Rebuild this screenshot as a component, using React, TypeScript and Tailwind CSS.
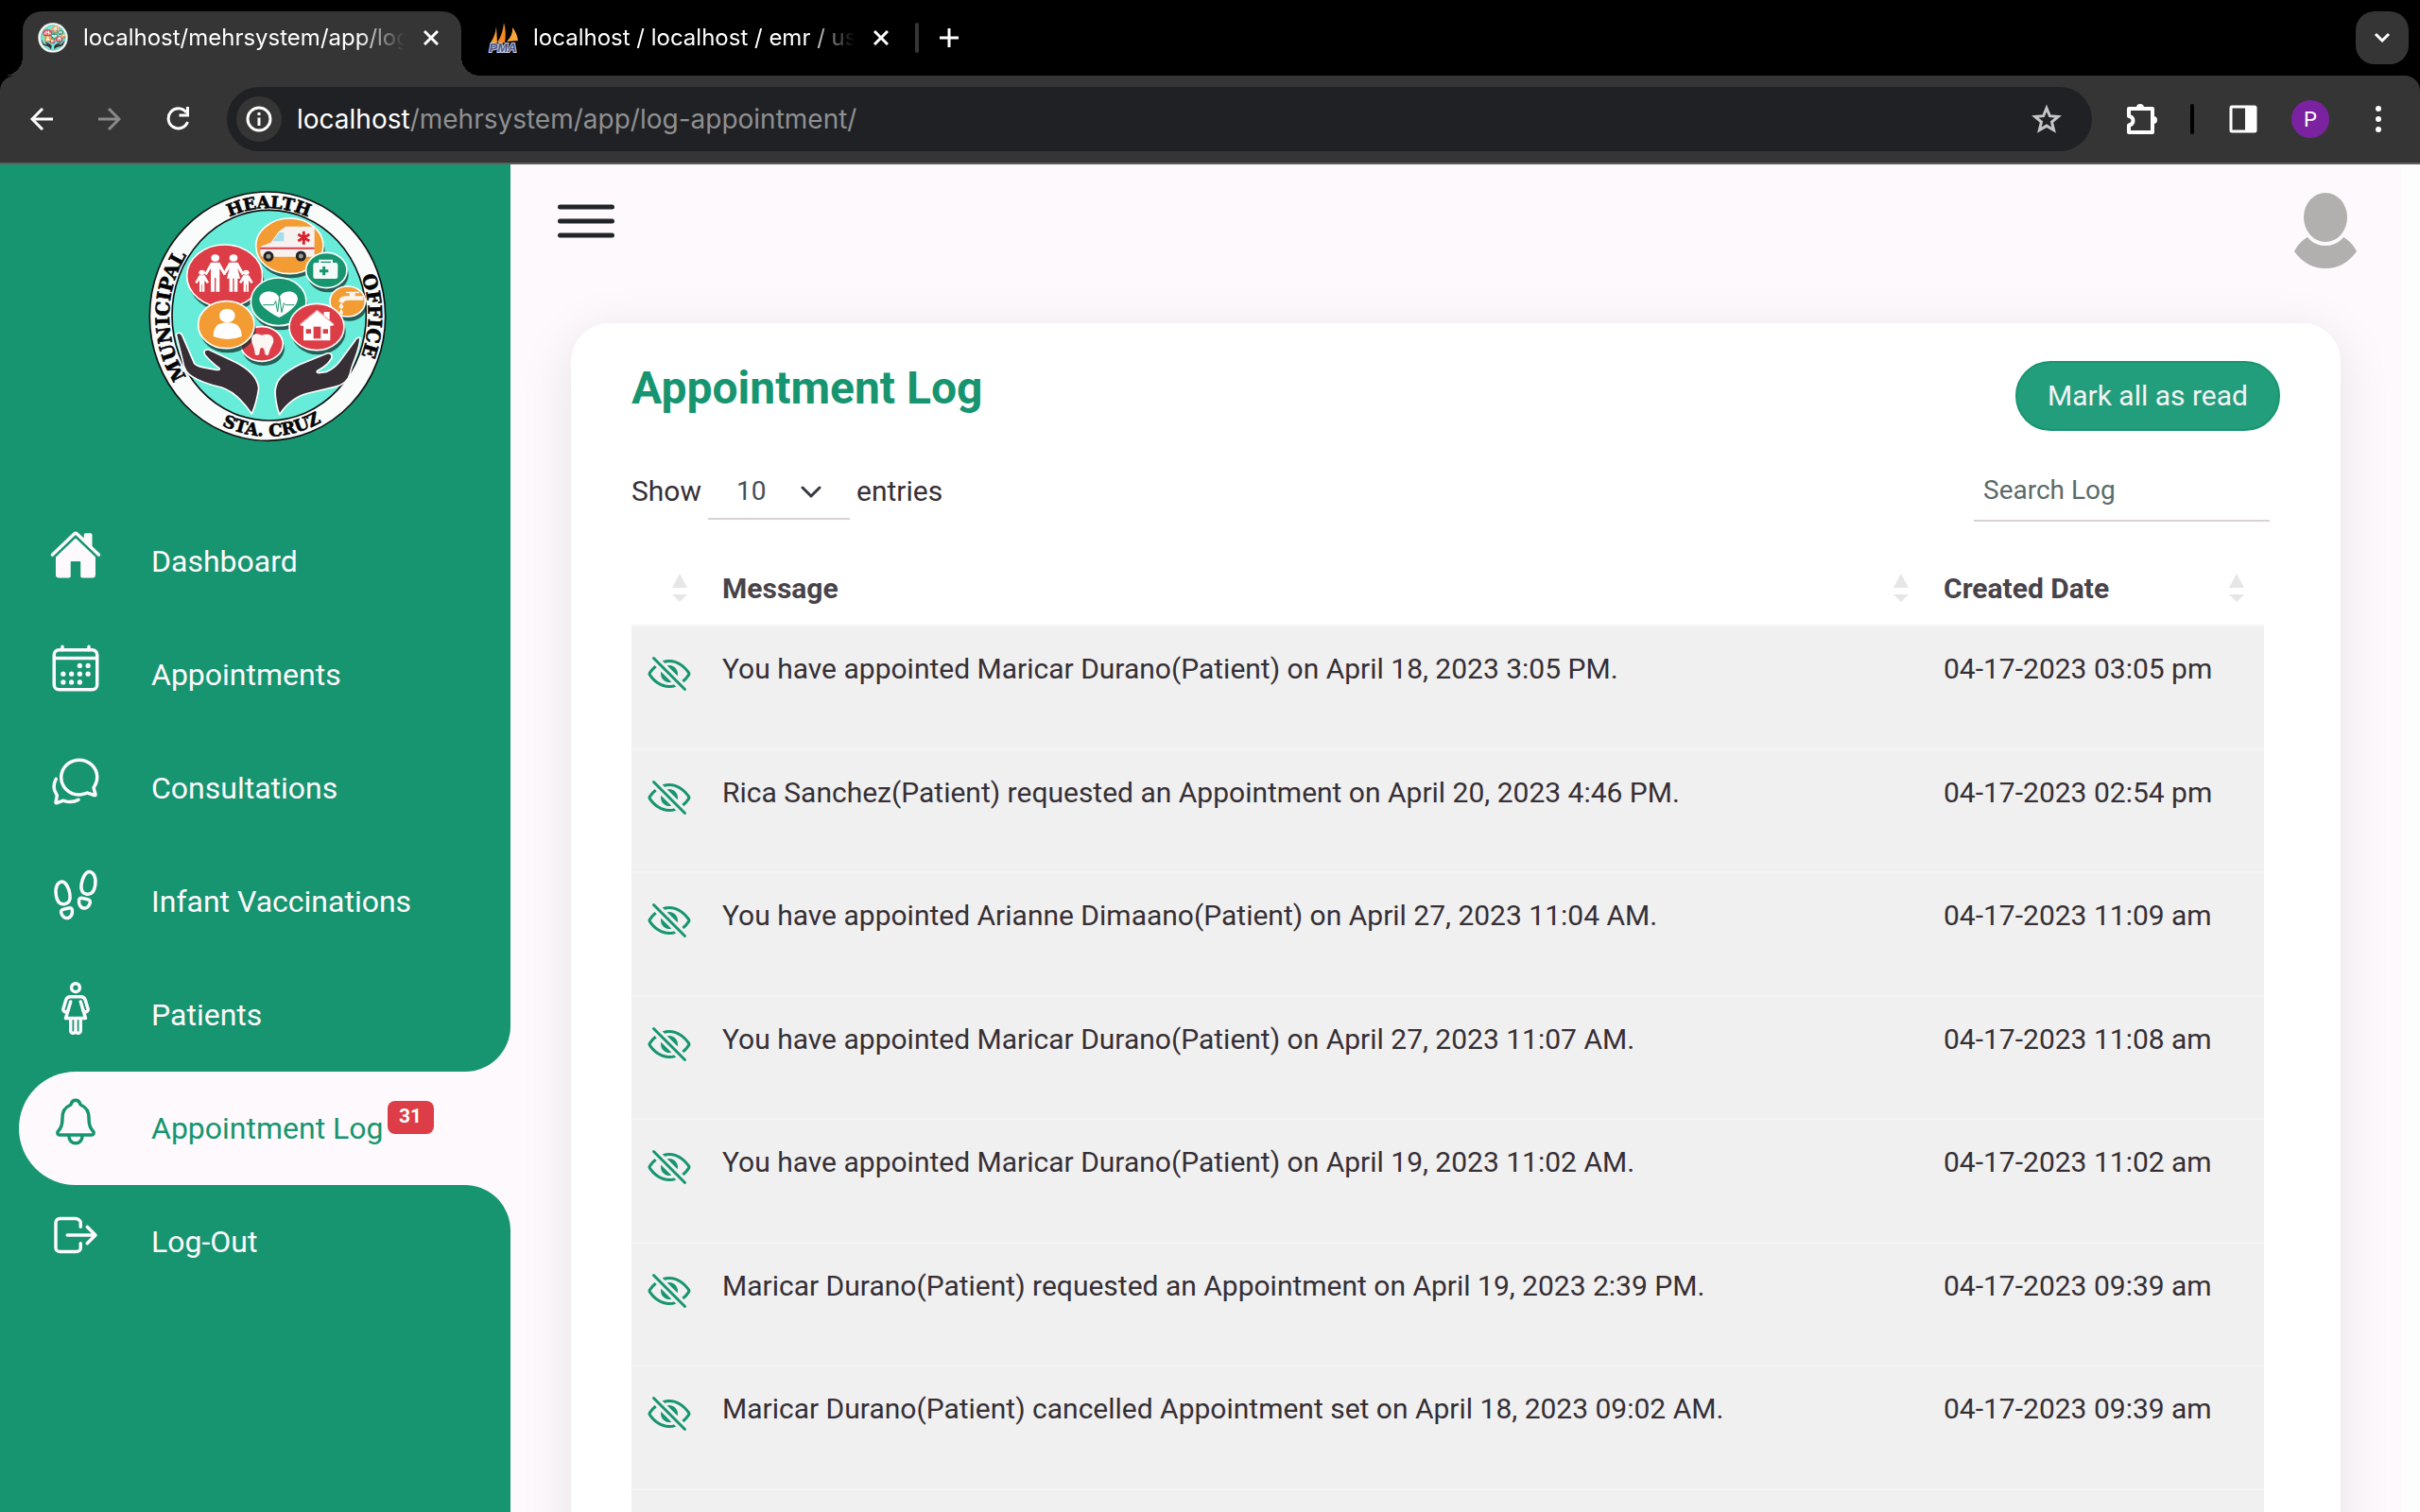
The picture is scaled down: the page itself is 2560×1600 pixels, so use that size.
import React from "react";
import {
  IoCalendarOutline,
  IoChatbubblesOutline,
  IoEyeOffOutline,
  IoFootstepsOutline,
  IoHome,
  IoLogOutOutline,
  IoMenuOutline,
  IoNotificationsOutline,
  IoWomanOutline,
} from "react-icons/io5";
import type { IconType } from "react-icons";

const LOGS = [
  { message: "You have appointed Maricar Durano(Patient) on April 18, 2023 3:05 PM.", date: "04-17-2023 03:05 pm" },
  { message: "Rica Sanchez(Patient) requested an Appointment on April 20, 2023 4:46 PM.", date: "04-17-2023 02:54 pm" },
  { message: "You have appointed Arianne Dimaano(Patient) on April 27, 2023 11:04 AM.", date: "04-17-2023 11:09 am" },
  { message: "You have appointed Maricar Durano(Patient) on April 27, 2023 11:07 AM.", date: "04-17-2023 11:08 am" },
  { message: "You have appointed Maricar Durano(Patient) on April 19, 2023 11:02 AM.", date: "04-17-2023 11:02 am" },
  { message: "Maricar Durano(Patient) requested an Appointment on April 19, 2023 2:39 PM.", date: "04-17-2023 09:39 am" },
  { message: "Maricar Durano(Patient) cancelled Appointment set on April 18, 2023 09:02 AM.", date: "04-17-2023 09:39 am" },
];

const NAV: { label: string; Icon: IconType; active?: boolean; badge?: string }[] = [
  { label: "Dashboard", Icon: IoHome },
  { label: "Appointments", Icon: IoCalendarOutline },
  { label: "Consultations", Icon: IoChatbubblesOutline },
  { label: "Infant Vaccinations", Icon: IoFootstepsOutline },
  { label: "Patients", Icon: IoWomanOutline },
  { label: "Appointment Log", Icon: IoNotificationsOutline, active: true, badge: "31" },
  { label: "Log-Out", Icon: IoLogOutOutline },
];

function Bubble({ cx, cy, rx, ry, fill }: { cx: number; cy: number; rx: number; ry: number; fill: string }) {
  return (
    <>
      <ellipse cx={cx + 5} cy={cy + 14} rx={rx} ry={ry} fill="#12302c" opacity="0.75" />
      <ellipse cx={cx} cy={cy} rx={rx} ry={ry} fill={fill} stroke="#fff" strokeWidth="5" />
    </>
  );
}

function Adult({ x, y, skirt }: { x: number; y: number; skirt?: boolean }) {
  return (
    <g fill="#fff" transform={`translate(${x} ${y})`}>
      <ellipse cx="0" cy="11" rx="13" ry="11" />
      {skirt ? (
        <path d="M-14 25h28l20 36-7 5-14-22 8 32h-8v42h-11v-42h-4v42h-11v-42h-8l8-32-14 22-7-5z" />
      ) : (
        <path d="M-14 25h28l20 36-7 5-13-22v74H2V74h-4v44h-12V44l-13 22-7-5z" />
      )}
    </g>
  );
}

function Child({ x, y }: { x: number; y: number }) {
  return (
    <g fill="#fff" transform={`translate(${x} ${y})`}>
      <ellipse cx="0" cy="8" rx="10" ry="8" />
      <path d="M-9 17H9l13 22-6 4-8-10v36H1V46h-2v23h-7V33l-8 10-6-4z" />
    </g>
  );
}

function HealthOfficeLogo({ className, lettering }: { className: string; lettering?: boolean }) {
  return (
    <svg viewBox="52 36 756 798" preserveAspectRatio="none" className={className} role="img" aria-label="Municipal Health Office logo">
      <defs>
        <path id="ring-clockwise" d="M434 775A316 342 0 0 1 118 433A316 342 0 0 1 434 91A316 342 0 0 1 750 433A316 342 0 0 1 434 775" />
        <path id="ring-bottom" d="M76 431A357 384 0 0 0 433 815A357 384 0 0 0 790 431" />
      </defs>
      <ellipse cx="430" cy="434" rx="374" ry="395" fill="#fafcfb" stroke="#111" strokeWidth="5" />
      <ellipse cx="435" cy="431" rx="308" ry="334" fill="#66ecd8" stroke="#111" strokeWidth="5" />

      <Bubble cx={500} cy={211} rx={107} ry={88} fill="#f29c33" />
      <Bubble cx={294} cy={306} rx={120} ry={99} fill="#dc3d47" />
      <Bubble cx={617} cy={288} rx={65} ry={56} fill="#17956f" />
      <Bubble cx={684} cy={387} rx={56} ry={48} fill="#f29c33" />
      <Bubble cx={465} cy={388} rx={88} ry={76} fill="#17956f" />
      <Bubble cx={586} cy={468} rx={87} ry={74} fill="#dc3d47" />
      <Bubble cx={412} cy={522} rx={67} ry={55} fill="#dc3d47" />
      <Bubble cx={299} cy={461} rx={89} ry={75} fill="#f29c33" />

      <path d="M408 212l32-12 26-36 22-15h85q6 0 6 6v90H412q-8-8-4-33z" fill="#f7f1f0" />
      <path d="M446 196l22-28h14v28z" fill="#a6dcec" />
      <path d="M406 218h173" stroke="#dc3d47" strokeWidth="6" />
      <path d="M545 164v42M527 174l36 21M563 174l-36 21" stroke="#d8232f" strokeWidth="9" />
      <circle cx="433" cy="244" r="12" fill="#999" stroke="#222" strokeWidth="9" />
      <circle cx="536" cy="243" r="12" fill="#999" stroke="#222" strokeWidth="9" />

      <Adult x={264} y={238} />
      <Adult x={322} y={238} skirt />
      <Child x={222} y={287} />
      <Child x={362} y={287} />

      <rect x="575" y="264" width="78" height="51" rx="7" fill="#f4faf8" />
      <path d="M596 266v-9h38v9" fill="none" stroke="#f4faf8" strokeWidth="6" />
      <path d="M609 276v28M595 290h28" stroke="#17956f" strokeWidth="9" />

      <path d="M656 388q2-18 20-18h14v-9h-11v-5h42v5h-13v9h26v13h-44q-18 0-20 10z" fill="#f9f4ec" />
      <path d="M664 391l7 12a7 7 0 1 1-14 0zM664 410l5 9a6 6 0 1 1-10 0z" fill="#f9f4ec" />

      <path d="M467 438C440 425 404 402 404 379C407 350 455 348 467 374C480 348 524 350 526 379C525 402 494 425 467 438z" fill="#fff" />
      <path d="M416 398h34l6-12 6 34 6-48 7 50 7-30 5 6h28" fill="none" stroke="#17956f" strokeWidth="3" />

      <path d="M532 459l55-46 22 17v-10h18v26l15 13-5 5h-8v47h-85v-47h-8z" fill="#fff" />
      <path d="M532 461l55-46 56 46" fill="none" stroke="#dc3d47" strokeWidth="2" />
      <rect x="576" y="467" width="23" height="38" fill="#dc3d47" />
      <path d="M552 475h16v14h-16zM606 475h16v14h-16z" fill="#dc3d47" />

      <ellipse cx="302" cy="432" rx="25" ry="22" fill="#fff" />
      <path d="M258 498c0-30 14-44 44-44s46 14 46 44q-45 18-90 0z" fill="#fff" />

      <path d="M380 500c8-16 22-9 32-6c12-4 30-6 36 10c5 18-10 26-14 50q-4 8-12 0c-2-14-4-20-10-20s-6 10-8 20q-8 8-14 0c0-24-14-34-10-54z" fill="#fbf6f4" />

      <g fill="#362f35" stroke="#fff" strokeWidth="5" strokeLinejoin="round">
        <path d="M140 492q12-12 20 4l38 88q8 8 26 12l44 8q14 2 8-6q-20-14-44-40q-10-20 12-18l84 40c44 22 70 46 74 82q-6 46-22 82c-30-44-58-72-96-84q-62-14-92-34q-26-12-32-54z" />
        <path d="M724 502q-12-2-18 12l-46 62q-16 22-42 34l-26 4q-10-2-2-8q32-16 44-40q2-18-16-14l-88 36c-50 26-74 46-76 86q2 40 14 72c24-36 58-60 92-68l84-20q40-10 48-42c8-40 30-68 32-114z" />
      </g>

      {lettering && (
        <g fontFamily="'DejaVu Serif', serif" fontWeight="700" textAnchor="middle" fill="#050505" stroke="#050505" strokeWidth="2">
          <text fontSize="60"><textPath href="#ring-clockwise" startOffset="25%">MUNICIPAL</textPath></text>
          <text fontSize="54"><textPath href="#ring-clockwise" startOffset="50%">HEALTH</textPath></text>
          <text fontSize="60"><textPath href="#ring-clockwise" startOffset="75%">OFFICE</textPath></text>
          <text fontSize="54"><textPath href="#ring-bottom" startOffset="51%">STA. CRUZ</textPath></text>
        </g>
      )}
    </svg>
  );
}

function PmaIcon() {
  return (
    <svg viewBox="0 0 32 32" className="size-8 shrink-0 overflow-visible" aria-hidden="true">
      <path d="M3 21Q8 14 9 4L10 21z" fill="#f89c2e" />
      <path d="M10 21Q16 12 17 0Q20 10 18 21z" fill="#f58a1f" />
      <path d="M20 20Q27 13 26 5Q31 11 32 19z" fill="#f8a43d" />
      <text x="16" y="31" textAnchor="middle" fontFamily="'Liberation Sans', sans-serif" fontSize="13" fontWeight="700" fontStyle="italic" fill="#4d5487" stroke="#c9cbe0" strokeWidth="2" paintOrder="stroke">PMA</text>
    </svg>
  );
}

function CloseIcon() {
  return (
    <svg viewBox="0 0 16 16" className="size-4" fill="none" stroke="currentColor" strokeWidth="3" aria-hidden="true">
      <path d="M1 1l14 14M15 1L1 15" />
    </svg>
  );
}

function BrowserTabs() {
  return (
    <div className="flex h-20 items-stretch bg-black pl-6 text-[24px] text-white">
      <div className="relative mt-3 flex w-[464px] items-center rounded-t-[20px] bg-[#353535] pb-3 pl-4">
        <span className="absolute bottom-0 -left-5 size-5 bg-[radial-gradient(circle_at_0_0,transparent_20px,#353535_20px)]" />
        <span className="absolute -right-5 bottom-0 size-5 bg-[radial-gradient(circle_at_100%_0,transparent_20px,#353535_20px)]" />
        <HealthOfficeLogo className="size-8 shrink-0" />
        <span className="ml-4 w-[340px] whitespace-nowrap [mask-image:linear-gradient(to_right,black_290px,transparent_340px)]">localhost/mehrsystem/app/log</span>
        <button type="button" aria-label="Close tab" className="ml-5"><CloseIcon /></button>
      </div>
      <div className="flex w-[480px] items-center pl-7">
        <PmaIcon />
        <span className="ml-4 w-[340px] whitespace-nowrap [mask-image:linear-gradient(to_right,black_290px,transparent_340px)]">localhost / localhost / emr / us</span>
        <button type="button" aria-label="Close tab" className="ml-5"><CloseIcon /></button>
      </div>
      <span className="mt-6 h-8 w-1 rounded-full bg-[#353535]" />
      <button type="button" aria-label="New tab" className="ml-5 flex items-center">
        <svg viewBox="0 0 24 24" className="size-6" stroke="currentColor" strokeWidth="3" aria-hidden="true"><path d="M2 12h20M12 2v20" /></svg>
      </button>
      <button type="button" aria-label="Search tabs" className="mt-3 mr-3 ml-auto flex size-14 items-center justify-center rounded-[20px] bg-[#353535]">
        <svg viewBox="0 0 18 12" className="h-3 w-[18px]" fill="none" stroke="currentColor" strokeWidth="3" aria-hidden="true"><path d="M2 2l7 7 7-7" /></svg>
      </button>
    </div>
  );
}

function BrowserToolbar() {
  return (
    <div className="bg-black">
      <div className="flex h-[94px] items-center rounded-t-[16px] border-b-2 border-[#5f5f5f] bg-[#353535] pr-[38px] pl-8 text-white">
        <button type="button" aria-label="Back">
          <svg viewBox="0 0 24 24" className="size-6" fill="none" stroke="currentColor" strokeWidth="3" aria-hidden="true"><path d="M24 12H2M13 1L2 12l11 11" /></svg>
        </button>
        <button type="button" aria-label="Forward" className="ml-12 text-[#8a8a8a]">
          <svg viewBox="0 0 24 24" className="size-6" fill="none" stroke="currentColor" strokeWidth="3" aria-hidden="true"><path d="M0 12h22M11 1l11 11-11 11" /></svg>
        </button>
        <button type="button" aria-label="Reload" className="ml-12">
          <svg viewBox="0 0 26 26" className="size-[26px]" fill="none" stroke="currentColor" strokeWidth="3" aria-hidden="true">
            <path d="M21 6A10.500 10.500 0 1 0 22.500 16" />
            <path d="M22.500 0v9h-9" />
          </svg>
        </button>
        <div className="ml-[38px] flex h-[68px] flex-1 items-center rounded-full bg-[#202124] pr-8 pl-[10px]">
          <button type="button" aria-label="View site information" className="flex size-12 shrink-0 items-center justify-center rounded-full bg-[#353535]">
            <svg viewBox="0 0 28 28" className="size-7" fill="none" stroke="currentColor" strokeWidth="3" aria-hidden="true"><circle cx="14" cy="14" r="12" /><path d="M14 12.500V21M14 7v3" /></svg>
          </button>
          <div role="textbox" aria-label="Address" className="ml-4 flex-1 text-[28px] whitespace-nowrap text-[#8f9092]">
            <span className="text-white">localhost</span>/mehrsystem/app/log-appointment/
          </div>
          <button type="button" aria-label="Bookmark this tab" className="text-[#c4c5c6]">
            <svg viewBox="0 0 32 32" className="size-8" fill="none" stroke="currentColor" strokeWidth="3" aria-hidden="true"><path d="M16 4.500l3.400 8.200 8.900.7-6.800 5.700 2.100 8.600L16 23.100l-7.600 4.600 2.100-8.600-6.800-5.700 8.900-.7z" /></svg>
          </button>
        </div>
        <button type="button" aria-label="Extensions" className="ml-[35px]">
          <svg viewBox="0 0 36 36" className="size-9" fill="none" stroke="currentColor" strokeWidth="4" strokeLinejoin="round" aria-hidden="true">
            <path d="M4 7h25v25H4v-7.500c6-1 6-8.500 0-9.500z" />
            <path d="M12 6a4 4 0 0 1 8 0zM30 15a4 4 0 0 1 0 8z" fill="currentColor" stroke="none" />
          </svg>
        </button>
        <span className="ml-[33px] h-8 w-1 rounded-full bg-black" />
        <button type="button" aria-label="Side panel" className="ml-[37px]">
          <svg viewBox="0 0 30 30" className="size-[30px]" aria-hidden="true"><rect x="2" y="2" width="26" height="26" rx="1" fill="none" stroke="currentColor" strokeWidth="3" /><path d="M17 2h11v26H17z" fill="currentColor" /></svg>
        </button>
        <button type="button" aria-label="Profile" className="ml-9 flex size-10 items-center justify-center rounded-full bg-[#7b22a0] font-['Roboto',sans-serif] text-[22px]">P</button>
        <button type="button" aria-label="Menu" className="ml-[46px]">
          <svg viewBox="0 0 12 30" className="h-[30px] w-3" fill="currentColor" aria-hidden="true"><circle cx="6" cy="4" r="3" /><circle cx="6" cy="15" r="3" /><circle cx="6" cy="26" r="3" /></svg>
        </button>
      </div>
    </div>
  );
}

function Sidebar() {
  return (
    <aside className="w-[540px] shrink-0 overflow-hidden bg-[#179570] pt-7">
      <HealthOfficeLogo lettering className="ml-[157px] h-[266px] w-[252px]" />
      <nav className="mt-[66px]">
        <ul>
          {NAV.map(({ label, Icon, active, badge }) => (
            <li
              key={label}
              className={
                active
                  ? "relative ml-5 rounded-l-full bg-[#fdf9fc] text-[#179570] before:absolute before:-top-12 before:right-0 before:size-12 before:rounded-br-[48px] before:shadow-[24px_24px_0_24px_#fdf9fc] after:absolute after:right-0 after:-bottom-12 after:size-12 after:rounded-tr-[48px] after:shadow-[24px_-24px_0_24px_#fdf9fc]"
                  : "pl-5 text-[#fdf9fc]"
              }
            >
              <a href="#" className="relative z-10 flex h-[120px] items-center">
                <Icon className="mb-[14px] ml-8 size-14 shrink-0" />
                <span className="ml-[52px] text-[32px] leading-[48px]">{label}</span>
                {badge && (
                  <span className="mb-6 ml-1 flex h-[35px] w-[49px] items-center justify-center rounded-lg bg-[#dc3d47] text-[21px] font-bold text-white">{badge}</span>
                )}
              </a>
            </li>
          ))}
        </ul>
      </nav>
    </aside>
  );
}

function SortArrows() {
  return (
    <svg viewBox="0 0 16 30" className="h-[30px] w-4 shrink-0 text-[#e6e6e6]" fill="currentColor" aria-hidden="true">
      <path d="M8 0l8 15H0zM0 22h16l-8 8z" />
    </svg>
  );
}

function HeaderCell({ label, className }: { label: string; className: string }) {
  return (
    <th scope="col" className={className}>
      <button type="button" aria-label={label || "Status"} className="flex h-[77px] w-full items-center justify-between pr-[21px] pb-px pl-4 font-bold text-[#484349]">
        <span>{label}</span>
        <SortArrows />
      </button>
    </th>
  );
}

export default function App() {
  return (
    <div className="flex h-screen flex-col overflow-hidden bg-[#fdfdfd] font-['Roboto',sans-serif]">
      <header className="font-['Inter',sans-serif]">
        <BrowserTabs />
        <BrowserToolbar />
      </header>
      <div className="flex min-h-0 flex-1">
        <Sidebar />
        <main className="mr-5 min-w-0 flex-1 overflow-hidden bg-[#fdf9fc]">
          <div className="flex items-center justify-between pt-5 pr-[46px] pl-10">
            <button type="button" aria-label="Toggle navigation" className="text-[#212529]">
              <IoMenuOutline className="size-20" />
            </button>
            <button type="button" aria-label="Account">
              <svg viewBox="0 0 68 80" className="h-20 w-[68px] overflow-visible" fill="#b1b0ae" aria-hidden="true">
                <ellipse cx="34" cy="36" rx="23" ry="26" />
                <path d="M15 57C24 69 44 69 53 57Q62 62 67 72Q54 90 34 90T1 72Q6 62 15 57z" />
              </svg>
            </button>
          </div>
          <section className="mx-16 mt-[68px] rounded-t-[40px] bg-white px-16 pt-10 shadow-[0_12px_56px_rgba(0,0,0,0.1)]">
            <div className="flex items-start justify-between">
              <h1 className="text-[48px] leading-[58px] font-bold text-[#179570]">Appointment Log</h1>
              <button type="button" className="h-[74px] w-[280px] rounded-full border-2 border-[#179570] bg-[#239e7d] pb-0.5 text-[30px] text-[#f3f3f3]">Mark all as read</button>
            </div>
            <div className="mt-8 flex items-start justify-between text-[30px] text-[#362f35]">
              <label className="flex items-center gap-[7px]">
                Show
                <span className="relative">
                  <select defaultValue="10" className="h-[62px] w-[150px] appearance-none border-b-2 border-[#d8d2d5] bg-white pt-1 pl-[30px] text-[28px] text-[#495057]">
                    <option>10</option>
                    <option>25</option>
                    <option>50</option>
                  </select>
                  <svg viewBox="0 0 22 14" className="pointer-events-none absolute top-[26px] right-[30px] h-[14px] w-[22px]" fill="none" stroke="#343a40" strokeWidth="3" strokeLinecap="round" strokeLinejoin="round" aria-hidden="true"><path d="M2 2l9 9 9-9" /></svg>
                </span>
                entries
              </label>
              <input type="search" aria-label="Search Log" placeholder="Search Log" className="mr-[11px] h-16 w-[313px] border-b-2 border-[#d8d2d5] pb-0.5 pl-[10px] text-[28px] placeholder:text-[#5b6b69]" />
            </div>
            <div className="mt-8 pr-[17px]">
              <table className="w-full table-fixed border-collapse text-left text-[30px] text-[#362f35]">
                <thead>
                  <tr>
                    <HeaderCell label="" className="w-20" />
                    <HeaderCell label="Message" className="" />
                    <HeaderCell label="Created Date" className="w-[355px]" />
                  </tr>
                </thead>
                <tbody className="align-top leading-[45px]">
                  {LOGS.map((log) => (
                    <tr key={log.message} className="border-t-2 border-[#f5f5f5] bg-[#f0f0f0] odd:h-[131px] even:h-[130px]">
                      <td className="pt-[26px] pl-4"><IoEyeOffOutline className="size-12 text-[#179570]" aria-label="Unread" /></td>
                      <td className="pt-[22px] pl-4">{log.message}</td>
                      <td className="pt-[22px] pl-4">{log.date}</td>
                    </tr>
                  ))}
                  <tr className="h-[130px] border-t-2 border-[#f5f5f5] bg-[#f0f0f0]">
                    <td colSpan={3} />
                  </tr>
                </tbody>
              </table>
            </div>
          </section>
        </main>
      </div>
    </div>
  );
}
